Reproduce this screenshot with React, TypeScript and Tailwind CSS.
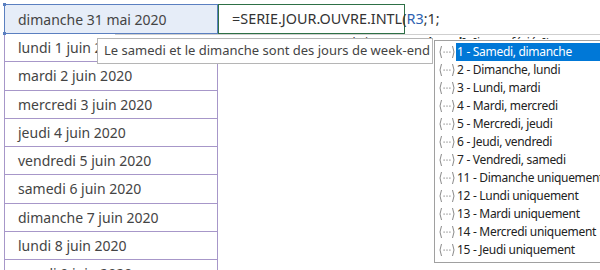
import React from "react";

const rows = [
  "lundi 1 juin 2020",
  "mardi 2 juin 2020",
  "mercredi 3 juin 2020",
  "jeudi 4 juin 2020",
  "vendredi 5 juin 2020",
  "samedi 6 juin 2020",
  "dimanche 7 juin 2020",
  "lundi 8 juin 2020",
  "mardi 9 juin 2020",
];

const options = [
  "1 - Samedi, dimanche",
  "2 - Dimanche, lundi",
  "3 - Lundi, mardi",
  "4 - Mardi, mercredi",
  "5 - Mercredi, jeudi",
  "6 - Jeudi, vendredi",
  "7 - Vendredi, samedi",
  "11 - Dimanche uniquement",
  "12 - Lundi uniquement",
  "13 - Mardi uniquement",
  "14 - Mercredi uniquement",
  "15 - Jeudi uniquement",
];

function ValueIcon() {
  return (
    <svg width="18" height="14" viewBox="0 0 18 14" className="shrink-0">
      <path d="M3.5 1 Q0.5 7 3.5 13" fill="none" stroke="#8a8a8a" strokeWidth="1" />
      <path d="M14.5 1 Q17.5 7 14.5 13" fill="none" stroke="#8a8a8a" strokeWidth="1" />
      <rect x="5.5" y="6.5" width="1.2" height="1.2" fill="#8a8a8a" />
      <rect x="8.4" y="6.5" width="1.2" height="1.2" fill="#8a8a8a" />
      <rect x="11.3" y="6.5" width="1.2" height="1.2" fill="#8a8a8a" />
    </svg>
  );
}

export default function App() {
  return (
    <div
      className="relative w-[600px] h-[270px] overflow-hidden bg-white text-[#444]"
      style={{ fontFamily: '"Noto Sans", "Open Sans", sans-serif' }}
    >
      <div className="pt-[4px] pl-[4px] flex flex-col">
        <div className="flex">
          <div className="relative w-[214px] h-[30px] border border-[#5a7fc0] bg-[#e6edf8] flex items-center pl-[13px] text-[14px]">
            dimanche 31 mai 2020
            <div className="absolute left-[-2px] top-[-2px] w-[3px] h-[3px] bg-[#5a7fc0]" />
            <div className="absolute left-[-2px] bottom-[-2px] w-[3px] h-[3px] bg-[#5a7fc0]" />
          </div>
          <div className="w-[187px] h-[30px] border border-[#2e7046] flex items-center pl-[13px] text-[14.4px] text-[#333] whitespace-nowrap">
            =SERIE.JOUR.OUVRE.INTL(<span className="text-[#2e62b0]">R3</span>;1;
            <span className="inline-block w-px h-[22px] bg-[#222] ml-[1px]" />
          </div>
        </div>
        <div className="flex flex-col w-[214px] border-x border-[#a797c9]">
          {rows.map((r) => (
            <div
              key={r}
              className="h-[28.25px] shrink-0 border-b border-[#a797c9] flex items-center pl-[13px] text-[14px] whitespace-nowrap"
            >
              {r}
            </div>
          ))}
        </div>
      </div>

      {/* function signature tooltip, mostly hidden behind the others */}
      <div className="absolute left-[115px] top-[34px] w-[500px] h-[5px] overflow-hidden bg-white border-t border-[#cfcfcf] pl-[230px] pt-[2px] text-[12px] text-[#333] whitespace-nowrap leading-none">
        nb_jours; <b>[week-end]</b>; [jours_fériés])
      </div>

      {/* argument tooltip */}
      <div className="absolute left-[97px] top-[38px] w-[336px] h-[26px] bg-white border border-[#b5b5b5] flex items-center pl-[6px] text-[13px] text-[#444] whitespace-nowrap">
        Le samedi et le dimanche sont des jours de week-end
      </div>

      {/* auto-complete list */}
      <div className="absolute left-[434px] top-[40px] w-[180px] h-[223px] bg-white border border-[#a0a0a0] pt-[2px] flex flex-col">
        {options.map((o, i) => (
          <div key={o} className="h-[18px] flex items-center pl-[3px]">
            <ValueIcon />
            <div
              className={
                i === 0
                  ? "h-full flex-1 flex items-center pl-[1px] bg-[#0078d7] text-white text-[12px] tracking-[-0.3px] whitespace-nowrap"
                  : "h-full flex-1 flex items-center pl-[1px] text-[#222] text-[12px] tracking-[-0.3px] whitespace-nowrap"
              }
            >
              {o}
            </div>
          </div>
        ))}
      </div>
    </div>
  );
}
